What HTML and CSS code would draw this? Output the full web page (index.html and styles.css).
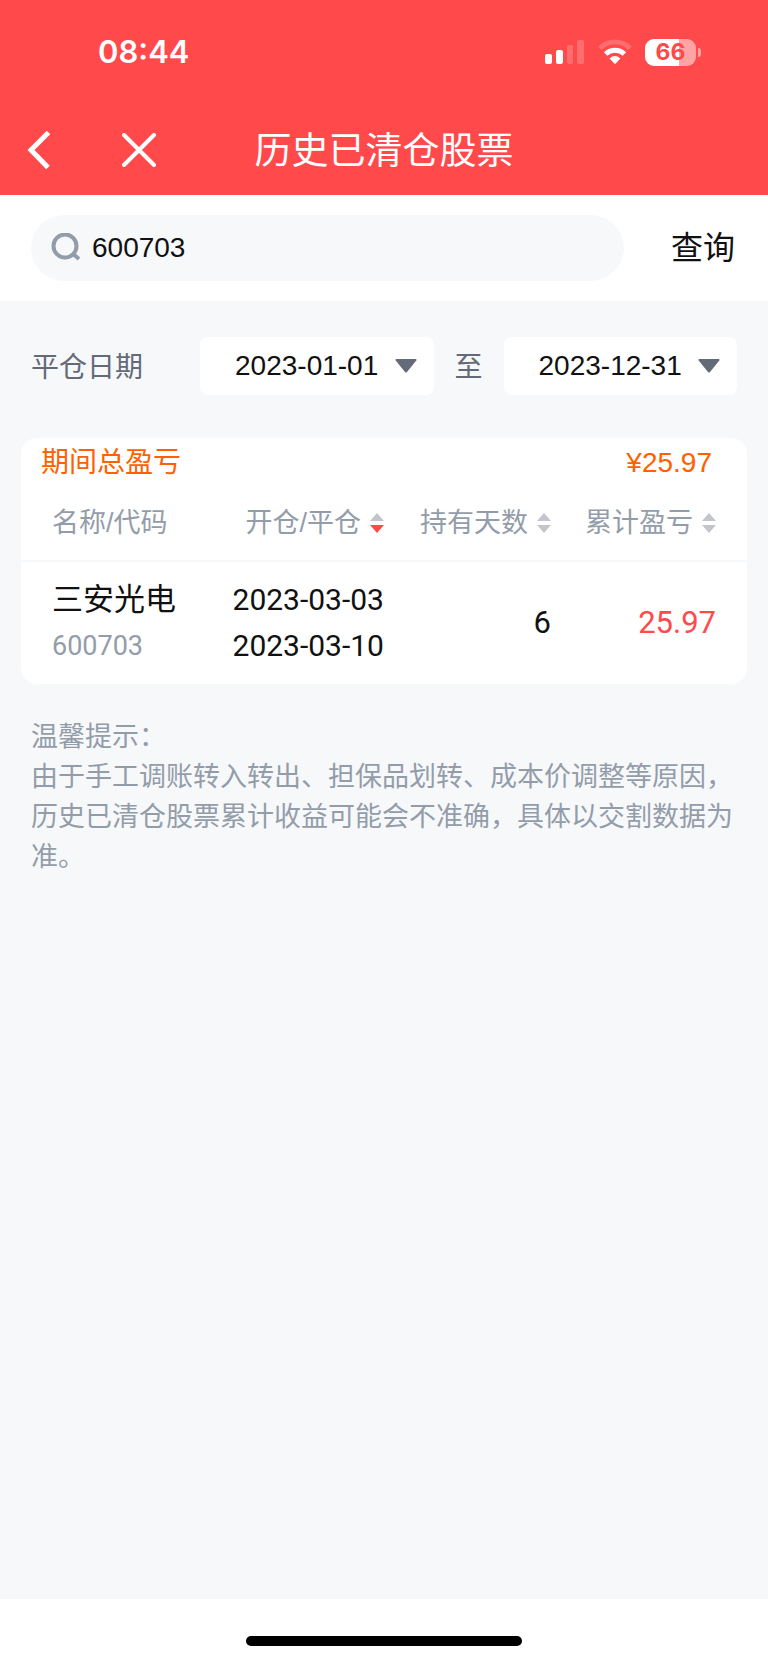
FILE: index.html
```html
<!DOCTYPE html>
<html lang="zh-CN">
<head>
<meta charset="utf-8">
<meta name="viewport" content="width=device-width, initial-scale=1">
<title>历史已清仓股票</title>
<link rel="stylesheet" href="styles.css">
</head>
<body>
<header class="top">
  <div class="status">
    <time class="clock">08:44</time>
    <div class="indicators">
      <svg class="signal" width="40" height="28" viewBox="0 0 40 28" fill="#fff" aria-hidden="true">
        <rect x="0" y="16" width="7" height="10" rx="2"/>
        <rect x="11" y="12" width="7" height="14" rx="2"/>
        <rect x="22" y="7" width="6" height="19" rx="2" opacity=".2"/>
        <rect x="32" y="2" width="7" height="24" rx="2" opacity=".2"/>
      </svg>
      <svg class="wifi" width="34" height="28" viewBox="0 0 34 28" fill="none" stroke="#fff" stroke-width="5" aria-hidden="true">
        <path d="M2 10.2a21.5 21.5 0 0 1 30 0" opacity=".2"/>
        <path d="M7.6 16a13.6 13.6 0 0 1 18.8 0"/>
        <path d="M11.6 20.4Q17 15.6 22.4 20.4L17.7 25.5Q17 26.2 16.3 25.5Z" fill="#fff" stroke="none"/>
      </svg>
      <div class="battery"><span class="battery-level">66</span><span class="battery-cap"></span></div>
    </div>
  </div>
  <nav class="nav">
    <div class="nav-actions">
      <button class="icon-button" type="button" aria-label="返回">
        <svg width="24" height="40" viewBox="0 0 24 40" fill="none" stroke="#fff" stroke-width="5"><path d="M21.5 2.5 4 20 21 37.5"/></svg>
      </button>
      <button class="icon-button" type="button" aria-label="关闭">
        <svg width="34" height="34" viewBox="0 0 34 34" fill="none" stroke="#fff" stroke-width="4" stroke-linecap="round"><path d="M2 2 32 32M32 2 2 32"/></svg>
      </button>
    </div>
    <h1 class="title">历史已清仓股票</h1>
  </nav>
</header>
<main class="content">
  <form class="search">
    <label class="search-box">
      <svg width="30" height="30" viewBox="0 0 30 30" fill="none" stroke="#939daa" stroke-width="4" aria-hidden="true"><circle cx="14" cy="13" r="11.5"/><path d="m21.5 20.5 6.5 5.5"/></svg>
      <input class="search-input" type="text" value="600703" aria-label="股票代码">
    </label>
    <button class="search-button" type="submit">查询</button>
  </form>
  <div class="dates">
    <label class="dates-label" for="from">平仓日期</label>
    <div class="picker">
      <select id="from" class="picker-select"><option>2023-01-01</option></select>
      <svg class="picker-arrow" width="22" height="14" viewBox="0 0 22 14" fill="#646a77" aria-hidden="true"><path d="M1 0H21Q22 .5 21.3 1.5L12 13Q11 14 10 13L.7 1.5Q0 .5 1 0Z"/></svg>
    </div>
    <label class="dates-to" for="to">至</label>
    <div class="picker">
      <select id="to" class="picker-select"><option>2023-12-31</option></select>
      <svg class="picker-arrow" width="22" height="14" viewBox="0 0 22 14" fill="#646a77" aria-hidden="true"><path d="M1 0H21Q22 .5 21.3 1.5L12 13Q11 14 10 13L.7 1.5Q0 .5 1 0Z"/></svg>
    </div>
  </div>
  <section class="card">
    <div class="summary"><span>期间总盈亏</span><span>¥25.97</span></div>
    <table class="stocks">
      <thead>
        <tr>
          <th class="col-name" scope="col">名称/代码</th>
          <th class="col-dates" scope="col"><button class="sort" type="button">开仓/平仓<svg width="14" height="20" viewBox="0 0 14 20" aria-hidden="true"><path d="M7 0 14 8H0Z" fill="#c2c5cd"/><path d="M0 12H14L7 20Z" fill="#ff494b"/></svg></button></th>
          <th class="col-days" scope="col"><button class="sort" type="button">持有天数<svg width="14" height="20" viewBox="0 0 14 20" fill="#c2c5cd" aria-hidden="true"><path d="M7 0 14 8H0Z"/><path d="M0 12H14L7 20Z"/></svg></button></th>
          <th class="col-profit" scope="col"><button class="sort" type="button">累计盈亏<svg width="14" height="20" viewBox="0 0 14 20" fill="#c2c5cd" aria-hidden="true"><path d="M7 0 14 8H0Z"/><path d="M0 12H14L7 20Z"/></svg></button></th>
        </tr>
      </thead>
      <tbody>
        <tr>
          <td class="col-name"><div class="name">三安光电</div><div class="code">600703</div></td>
          <td class="col-dates"><div class="date">2023-03-03</div><div class="date">2023-03-10</div></td>
          <td class="col-days">6</td>
          <td class="col-profit">25.97</td>
        </tr>
      </tbody>
    </table>
  </section>
  <section class="tips">
    <p>温馨提示：</p>
    <p>由于手工调账转入转出、担保品划转、成本价调整等原因，历史已清仓股票累计收益可能会不准确，具体以交割数据为准。</p>
  </section>
</main>
<footer class="home"><div class="home-bar"></div></footer>
</body>
</html>
```

FILE: styles.css
```css
* {
  box-sizing: border-box;
}

body {
  display: flex;
  flex-direction: column;
  min-height: 100vh;
  margin: 0;
  background: #f7f8fa;
  color: #111;
  font-family: "Liberation Sans", "Noto Sans CJK SC", sans-serif;
  font-size: 28px;
  line-height: 40px;
}

button,
input,
select {
  margin: 0;
  padding: 0;
  border: 0;
  background: none;
  color: inherit;
  font: inherit;
}

svg {
  display: block;
  flex: none;
}

.top {
  background: #ff494b;
  color: #fff;
}

.status {
  display: flex;
  align-items: center;
  justify-content: space-between;
  height: 104px;
  padding: 0 67px 0 98px;
}

.clock {
  font-family: Inter, sans-serif;
  font-size: 31px;
  font-weight: 600;
}

.indicators {
  display: flex;
  align-items: center;
  gap: 13px;
}

.battery {
  display: flex;
  align-items: center;
  gap: 2px;
}

.battery-level {
  width: 51px;
  height: 27px;
  border-radius: 9px;
  background: linear-gradient(90deg, #fff 66%, #ffa4a5 66%);
  color: #ff494b;
  font-family: Inter, sans-serif;
  font-size: 23px;
  font-weight: 700;
  line-height: 27px;
  text-align: center;
}

.battery-cap {
  width: 3px;
  height: 9px;
  border-radius: 0 3px 3px 0;
  background: #ffa4a5;
}

.nav {
  display: grid;
  grid-template-columns: 1fr auto 1fr;
  align-items: center;
  height: 91px;
  padding: 0 27px;
}

.nav-actions {
  display: flex;
  align-items: center;
  gap: 71px;
}

.title {
  margin: 0;
  padding-top: 4px;
  font-size: 37px;
  font-weight: 400;
}

.content {
  flex: 1;
}

.search {
  display: flex;
  align-items: center;
  gap: 47px;
  padding: 20px 33px 20px 31px;
  background: #fff;
}

.search-box {
  display: flex;
  flex: 1;
  align-items: center;
  gap: 11px;
  height: 66px;
  padding: 0 20px;
  border-radius: 33px;
  background: #f7f8fa;
}

.search-input {
  flex: 1;
  min-width: 0;
  outline: 0;
}

.search-button {
  font-size: 32px;
}

.dates {
  display: flex;
  align-items: center;
  gap: 21px;
  padding: 36px 31px 43px;
  color: #646a77;
}

.dates-label {
  margin-right: 36px;
}

.dates-label,
.dates-to {
  padding-top: 3px;
}

.picker {
  display: grid;
  flex: 1;
  align-items: center;
  border-radius: 8px;
  background: #fff;
}

.picker-select {
  grid-area: 1 / 1;
  width: 100%;
  height: 58px;
  padding-left: 35px;
  color: #111;
  appearance: none;
}

.picker-arrow {
  grid-area: 1 / 1;
  justify-self: end;
  margin-right: 17px;
  pointer-events: none;
}

.card {
  margin: 0 21px;
  border-radius: 16px;
  background: #fff;
}

.summary {
  display: flex;
  justify-content: space-between;
  padding: 5px 35px 3px 20px;
  color: #ff6000;
}

.stocks {
  width: 100%;
  border-collapse: collapse;
  table-layout: fixed;
}

.stocks th {
  height: 75px;
  padding: 0;
  border-bottom: 2px solid #f7f8fa;
  color: #939daa;
  font-size: 27px;
  font-weight: 400;
  text-align: right;
  white-space: nowrap;
}

.stocks td {
  padding: 15px 0;
  font-family: Roboto, "Noto Sans CJK SC", sans-serif;
  font-size: 31px;
  line-height: 46px;
  text-align: right;
}

.stocks .col-name {
  width: 26%;
  padding-left: 31px;
  text-align: left;
}

.stocks .col-dates {
  width: 24%;
}

.stocks .col-days {
  width: 23%;
}

.stocks .col-profit {
  width: 27%;
  padding-right: 31px;
}

.sort {
  display: inline-flex;
  align-items: center;
  gap: 9px;
}

.code {
  color: #939daa;
  font-size: 27px;
}

.date {
  font-size: 30px;
}

td.col-profit {
  color: #ff494b;
}

.tips {
  padding: 33px 31px 40px;
  color: #939daa;
  font-size: 27px;
}

.tips p {
  margin: 0;
}

.home {
  display: flex;
  justify-content: center;
  padding: 37px 0 17px;
  background: #fff;
}

.home-bar {
  width: 36%;
  height: 10px;
  border-radius: 5px;
  background: #000;
}
```
